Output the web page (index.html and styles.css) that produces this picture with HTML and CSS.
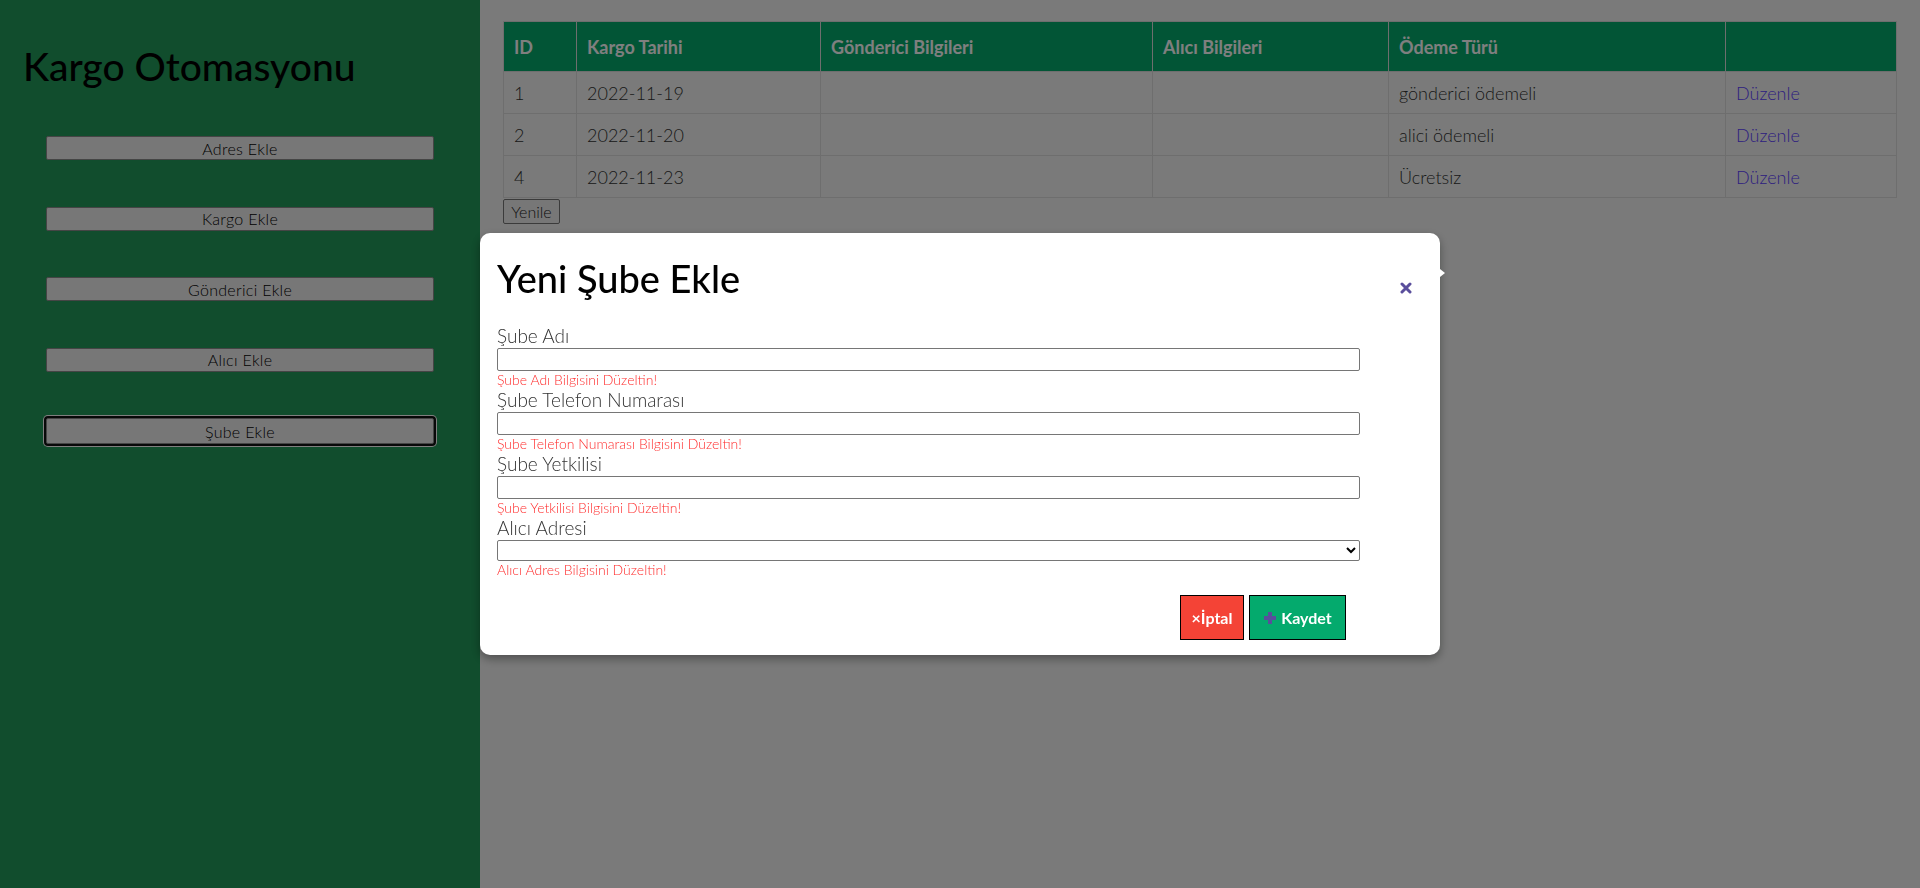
FILE: index.html
```html
<!DOCTYPE html>
<html lang="tr">
<head>
<meta charset="utf-8">
<title>Kargo Otomasyonu</title>
<link rel="stylesheet" href="styles.css">
</head>
<body>
<div class="app">
  <aside class="sidebar">
    <h1 class="brand">Kargo Otomasyonu</h1>
    <nav class="menu">
      <button class="menu-btn" type="button">Adres Ekle</button>
      <button class="menu-btn" type="button">Kargo Ekle</button>
      <button class="menu-btn" type="button">Gönderici Ekle</button>
      <button class="menu-btn" type="button">Alıcı Ekle</button>
      <button class="menu-btn menu-btn-active" type="button">Şube Ekle</button>
    </nav>
  </aside>
  <main class="content">
    <table class="cargo-table">
      <colgroup>
        <col class="col-id"><col class="col-date"><col class="col-sender"><col class="col-receiver"><col class="col-pay"><col class="col-action">
      </colgroup>
      <thead>
        <tr><th>ID</th><th>Kargo Tarihi</th><th>Gönderici Bilgileri</th><th>Alıcı Bilgileri</th><th>Ödeme Türü</th><th></th></tr>
      </thead>
      <tbody>
        <tr><td>1</td><td>2022-11-19</td><td></td><td></td><td>gönderici ödemeli</td><td><a class="edit-link" href="#">Düzenle</a></td></tr>
        <tr><td>2</td><td>2022-11-20</td><td></td><td></td><td>alici ödemeli</td><td><a class="edit-link" href="#">Düzenle</a></td></tr>
        <tr><td>4</td><td>2022-11-23</td><td></td><td></td><td>Ücretsiz</td><td><a class="edit-link" href="#">Düzenle</a></td></tr>
      </tbody>
    </table>
    <button class="refresh-btn" type="button">Yenile</button>
  </main>
</div>

<div class="backdrop">
  <div class="modal">
    <div class="modal-head">
      <h2 class="modal-title">Yeni Şube Ekle</h2>
      <button class="modal-close" type="button" aria-label="Kapat">
        <svg width="12" height="12" viewBox="0 0 12 12"><path d="M2 2 L10 10 M10 2 L2 10" stroke="#5a4e9c" stroke-width="3" stroke-linecap="round"/></svg>
      </button>
    </div>
    <form class="modal-form">
      <div class="field">
        <label class="field-label">Şube Adı</label>
        <input class="field-input" type="text">
        <span class="field-error">Şube Adı Bilgisini Düzeltin!</span>
      </div>
      <div class="field">
        <label class="field-label">Şube Telefon Numarası</label>
        <input class="field-input" type="text">
        <span class="field-error">Şube Telefon Numarası Bilgisini Düzeltin!</span>
      </div>
      <div class="field">
        <label class="field-label">Şube Yetkilisi</label>
        <input class="field-input" type="text">
        <span class="field-error">Şube Yetkilisi Bilgisini Düzeltin!</span>
      </div>
      <div class="field">
        <label class="field-label">Alıcı Adresi</label>
        <select class="field-input field-select"><option></option></select>
        <span class="field-error">Alıcı Adres Bilgisini Düzeltin!</span>
      </div>
      <div class="modal-actions">
        <button class="btn btn-cancel" type="button">×İptal</button>
        <button class="btn btn-save" type="button"><svg class="plus-icon" width="14" height="14" viewBox="0 0 14 14"><path d="M7 1 V13 M1 7 H13" stroke="#5a4e9c" stroke-width="4"/></svg>Kaydet</button>
      </div>
    </form>
  </div>
</div>
</body>
</html>
```

FILE: styles.css
```css
* { box-sizing: border-box; }

html, body {
  margin: 0;
  height: 100%;
}

body {
  font-family: "Lato", "Open Sans", sans-serif;
  color: #000;
  overflow: hidden;
}

.app {
  display: flex;
  height: 100vh;
}

/* Sidebar */
.sidebar {
  width: 480px;
  flex: none;
  background: #229a5a;
}

.brand {
  margin: 42px 0 0;
  padding-left: 23px;
  font-size: 39px;
  line-height: 48px;
  font-weight: 500;
}

.menu {
  display: flex;
  flex-direction: column;
  gap: 46.5px;
  margin-top: 46px;
  padding: 0 46px;
}

.menu-btn {
  height: 24px;
  width: 100%;
  background: #efefef;
  border: 1px solid #8a8a8a;
  border-radius: 2px;
  font-family: inherit;
  font-size: 16px;
  font-weight: 300;
  letter-spacing: 0.3px;
  color: #000;
  padding: 0;
}

.menu-btn-active {
  height: 26px;
  box-shadow: 0 0 0 2px #101010, 0 0 0 3px #ffffff;
}

/* Content */
.content {
  flex: 1;
  background: #f4f5f4;
  padding: 21px 24px 0 23px;
}

.cargo-table {
  width: 100%;
  border-collapse: collapse;
  table-layout: fixed;
  font-size: 18px;
}

.col-id { width: 73px; }
.col-date { width: 244px; }
.col-sender { width: 332px; }
.col-receiver { width: 236px; }
.col-pay { width: 337px; }
.col-action { width: 171px; }

.cargo-table th,
.cargo-table td {
  border: 1px solid #dddddd;
  text-align: left;
  line-height: 24px;
  padding: 9px 10px 8px;
}

.cargo-table th {
  background: #04aa6d;
  color: #ffffff;
  font-weight: 700;
  padding: 13px 10px 12px;
}

.cargo-table td {
  color: #333;
  font-weight: 300;
}

.edit-link {
  color: #5a3cff;
  text-decoration: none;
}

.refresh-btn {
  margin-top: 1px;
  height: 25px;
  width: 57px;
  padding: 0;
  background: #efefef;
  border: 1px solid #767676;
  border-radius: 2px;
  font-family: inherit;
  font-size: 16px;
  font-weight: 300;
  color: #222;
}

/* Modal */
.backdrop {
  position: fixed;
  inset: 0;
  background: rgba(0, 0, 0, 0.5);
  display: flex;
  align-items: center;
  justify-content: center;
}

.modal {
  position: relative;
  width: 960px;
  background: #fff;
  border-radius: 10px;
  padding: 23px 17px 15px;
  box-shadow: 0 4px 10px rgba(0, 0, 0, 0.35);
}

.modal::after {
  content: "";
  position: absolute;
  right: -5px;
  top: 36px;
  border-left: 5px solid #fff;
  border-top: 4px solid transparent;
  border-bottom: 4px solid transparent;
}

.modal-head {
  display: flex;
  justify-content: space-between;
  align-items: flex-start;
}

.modal-title {
  margin: 0;
  font-size: 38px;
  line-height: 44px;
  font-weight: 500;
}

.modal-close {
  margin: 26px 11px 0 0;
  padding: 0;
  width: 12px;
  height: 12px;
  border: 0;
  background: none;
  display: flex;
}

.modal-form {
  margin-top: 24px;
}

.field {
  display: flex;
  flex-direction: column;
}

.field-label {
  font-size: 19px;
  line-height: 24px;
  font-weight: 300;
  color: #333;
}

.field-input {
  width: 863px;
  height: 23px;
  border: 1px solid #767676;
  border-radius: 2px;
  background: #fff;
  margin: 0;
}

.field-select {
  height: 21px;
  font-family: inherit;
  font-size: 13px;
}

.field-error {
  font-size: 14px;
  line-height: 17px;
  font-weight: 300;
  color: #ff2d2d;
}

.modal-actions {
  width: 863px;
  display: flex;
  justify-content: flex-end;
  gap: 5px;
  margin-top: 17px;
  padding-right: 14px;
}

.btn {
  height: 45px;
  border: 1px solid #000;
  color: #fff;
  font-family: inherit;
  font-size: 16px;
  font-weight: 700;
  display: flex;
  align-items: center;
  justify-content: center;
}

.btn-cancel {
  width: 64px;
  background: #f44336;
  padding: 0;
}

.btn-save {
  width: 97px;
  background: #04aa6d;
  padding: 0;
  gap: 4px;
}
```
